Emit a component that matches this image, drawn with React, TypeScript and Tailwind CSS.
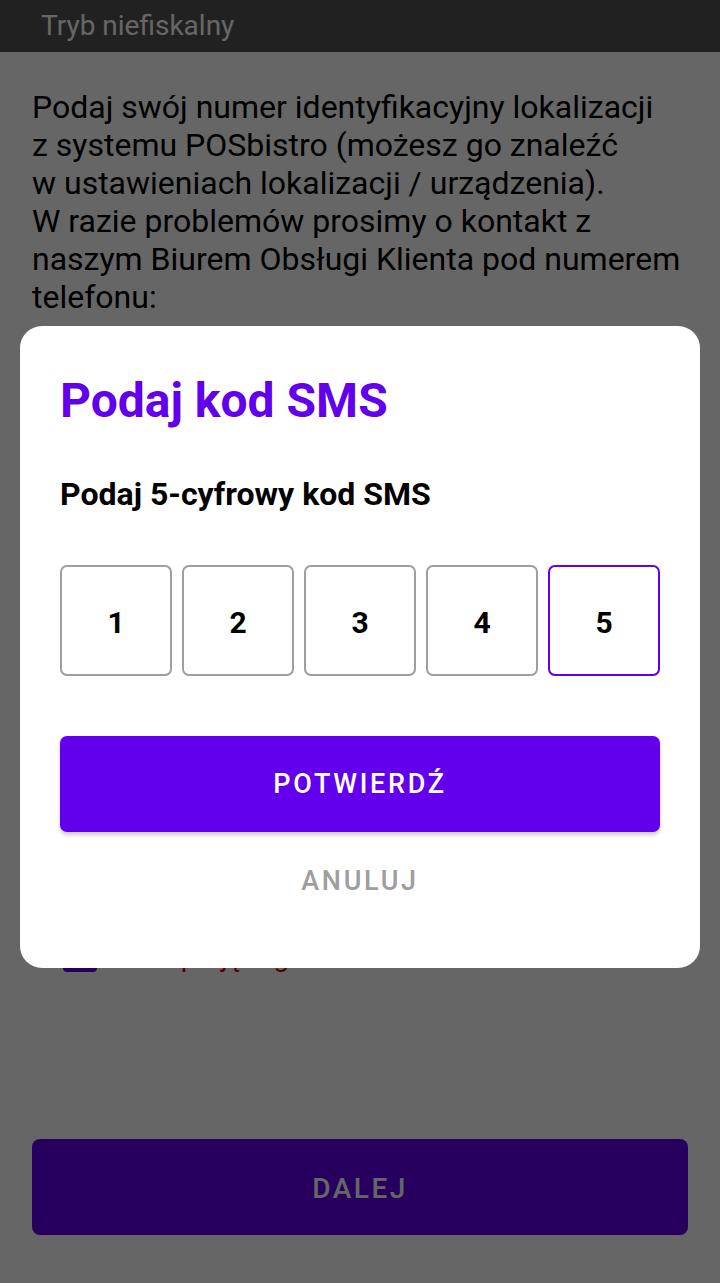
import React from "react";

const font = { fontFamily: "Roboto, 'Noto Sans', sans-serif" };

export default function App() {
  const digits = ["1", "2", "3", "4", "5"];
  return (
    <div className="relative w-[720px] h-[1283px] bg-white overflow-hidden" style={font}>
      {/* Underlying page */}
      <div className="flex flex-col h-full">
        <div className="h-[52px] bg-[#535353] flex items-center pl-[41px] shrink-0">
          <span className="text-[28px] text-white leading-none">Tryb niefiskalny</span>
        </div>
        <div className="px-[32px] pt-[36px] flex flex-col flex-1">
          <p className="text-[32px] leading-[38px] text-black">
            Podaj swój numer identyfikacyjny lokalizacji
            <br />z systemu POSbistro (możesz go znaleźć
            <br />w ustawieniach lokalizacji / urządzenia).
            <br />W razie problemów prosimy o kontakt z
            <br />naszym Biurem Obsługi Klienta pod numerem
            <br />telefonu:
          </p>
          <div className="mt-[620px] flex items-center gap-[22px] pl-[31px]">
            <div className="w-[34px] h-[34px] rounded-[4px] bg-[#6200EE] shrink-0" />
            <span className="text-[28px] text-[#d50000] leading-[34px] pt-[4px]">Akceptuję regulamin</span>
          </div>
          <div className="flex-1" />
          <div className="mb-[48px] h-[96px] rounded-[8px] bg-[#6200EE] flex items-center justify-center pt-[4px]">
            <span className="text-white text-[28px] font-medium tracking-[0.09em]">DALEJ</span>
          </div>
        </div>
      </div>

      {/* Dim overlay */}
      <div className="absolute inset-0 bg-black/60" />

      {/* Dialog */}
      <div className="absolute left-[20px] top-[326px] w-[680px] h-[642px] bg-white rounded-[22px] px-[40px] pt-[47px] flex flex-col">
        <h1 className="text-[48px] leading-[56px] font-bold text-[#6200EE]">Podaj kod SMS</h1>
        <p className="mt-[46px] text-[32px] leading-[38px] font-bold text-black">Podaj 5-cyfrowy kod SMS</p>
        <div className="mt-[52px] flex gap-[10px]">
          {digits.map((d, i) => (
            <div
              key={d}
              className={
                i === 4
                  ? "w-[112px] h-[111px] rounded-[7px] border-2 border-[#6200EE] flex items-center justify-center pt-[3px] text-[30px] font-bold text-black"
                  : "w-[112px] h-[111px] rounded-[7px] border-2 border-[#9e9e9e] flex items-center justify-center pt-[3px] text-[30px] font-bold text-black"
              }
            >
              {d}
            </div>
          ))}
        </div>
        <button className="mt-[60px] h-[96px] w-full rounded-[7px] bg-[#6200EE] text-white text-[27px] font-medium tracking-[0.1em] shadow-[0_3px_4px_rgba(0,0,0,0.2)]">
          POTWIERDŹ
        </button>
        <button className="mt-[16px] h-[66px] w-full text-[#9e9e9e] text-[27px] font-medium tracking-[0.1em]">
          ANULUJ
        </button>
      </div>
    </div>
  );
}
